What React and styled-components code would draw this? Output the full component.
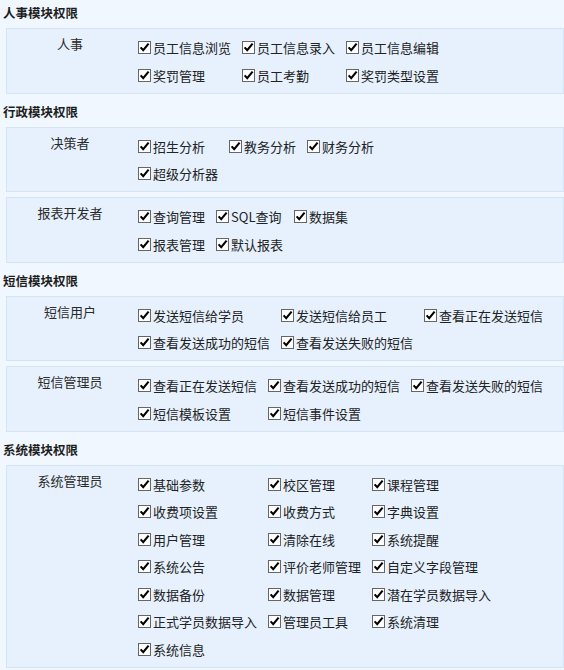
import React from 'react';
import styled, { createGlobalStyle } from 'styled-components';

const GlobalStyle = createGlobalStyle`
  html, body {
    margin: 0;
    padding: 0;
    background: #f0f7fe;
  }
  body {
    font-family: "Noto Sans CJK SC", "Noto Sans", "Liberation Sans", sans-serif;
    color: #222;
  }
`;

const Page = styled.div`
  width: 564px;
  display: flex;
  flex-direction: column;
`;

const SectionTitle = styled.div`
  height: 28px;
  line-height: 25px;
  padding-left: 3px;
  font-size: 12.5px;
  font-weight: bold;
  color: #1e1e1e;
`;

const Panel = styled.div`
  display: flex;
  margin: 0 0 5px 6px;
  padding: 5px 0 3.5px;
  background: #e6f1fd;
  border: 1px solid #d3e4f5;
`;

const RoleName = styled.div`
  width: 126px;
  flex-shrink: 0;
  padding-top: 1px;
  line-height: 18px;
  height: 18px;
  font-size: 13px;
  text-align: center;
  color: #2a2a2a;
`;

const Items = styled.div`
  margin-left: 5px;
  display: grid;
  grid-template-columns: repeat(${p => p.$cols}, max-content);
  grid-auto-rows: 27.5px;
  column-gap: 11px;
  align-items: center;
`;

const Item = styled.label`
  display: flex;
  align-items: center;
  font-size: 13px;
  line-height: 16px;
  padding-top: 1px;
  color: #222;
  white-space: nowrap;
`;

const Box = styled.svg`
  width: 13px;
  height: 13px;
  margin-right: 2px;
  margin-top: -1px;
  flex-shrink: 0;
`;

function Check() {
  return (
    <Box viewBox="0 0 13 13">
      <rect x="0.5" y="0.5" width="12" height="12" fill="#fff" stroke="#666" />
      <path d="M2.6 6.4 L5.2 9.2 L10.6 2.6" fill="none" stroke="#000" strokeWidth="2.1" />
    </Box>
  );
}

const modules = [
  {
    title: '人事模块权限',
    roles: [
      { name: '人事', items: ['员工信息浏览', '员工信息录入', '员工信息编辑', '奖罚管理', '员工考勤', '奖罚类型设置'] },
    ],
  },
  {
    title: '行政模块权限',
    roles: [
      { name: '决策者', items: ['招生分析', '教务分析', '财务分析', '超级分析器'] },
      { name: '报表开发者', items: ['查询管理', 'SQL查询', '数据集', '报表管理', '默认报表'] },
    ],
  },
  {
    title: '短信模块权限',
    roles: [
      { name: '短信用户', items: ['发送短信给学员', '发送短信给员工', '查看正在发送短信', '查看发送成功的短信', '查看发送失败的短信'] },
      { name: '短信管理员', items: ['查看正在发送短信', '查看发送成功的短信', '查看发送失败的短信', '短信模板设置', '短信事件设置'] },
    ],
  },
  {
    title: '系统模块权限',
    roles: [
      {
        name: '系统管理员',
        items: [
          '基础参数', '校区管理', '课程管理',
          '收费项设置', '收费方式', '字典设置',
          '用户管理', '清除在线', '系统提醒',
          '系统公告', '评价老师管理', '自定义字段管理',
          '数据备份', '数据管理', '潜在学员数据导入',
          '正式学员数据导入', '管理员工具', '系统清理',
          '系统信息',
        ],
      },
    ],
  },
];

export default function App() {
  return (
    <Page>
      <GlobalStyle />
      {modules.map(m => (
        <React.Fragment key={m.title}>
          <SectionTitle>{m.title}</SectionTitle>
          {m.roles.map(r => (
            <Panel key={r.name}>
              <RoleName>{r.name}</RoleName>
              <Items $cols={3}>
                {r.items.map(it => (
                  <Item key={it}>
                    <Check />
                    {it}
                  </Item>
                ))}
              </Items>
            </Panel>
          ))}
        </React.Fragment>
      ))}
    </Page>
  );
}
